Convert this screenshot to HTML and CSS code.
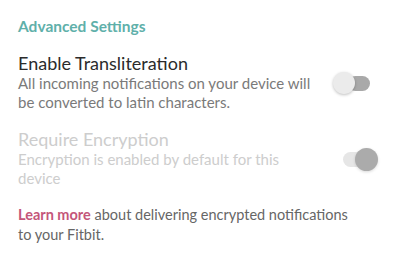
FILE: index.html
```html
<!DOCTYPE html>
<html lang="en">
<head>
  <meta charset="UTF-8" />
  <title>Advanced Settings</title>
  <link rel="stylesheet" href="styles.css">
</head>
<body>
  <div class="settings">
    <h2 class="section-title">Advanced Settings</h2>

    <div class="row">
      <div class="row-text">
        <div class="row-title">Enable Transliteration</div>
        <div class="row-desc">All incoming notifications on your device will be converted to latin characters.</div>
      </div>
      <div class="toggle">
        <div class="track"></div>
        <div class="thumb"></div>
      </div>
    </div>

    <div class="row disabled">
      <div class="row-text">
        <div class="row-title">Require Encryption</div>
        <div class="row-desc">Encryption is enabled by default for this device</div>
      </div>
      <div class="toggle on">
        <div class="track"></div>
        <div class="thumb"></div>
      </div>
    </div>

    <p class="note"><span class="learn">Learn more</span> about delivering encrypted notifications to your Fitbit.</p>
  </div>
</body>
</html>
```

FILE: styles.css
```css
body {
  margin: 0;
  background-color: #fff;
  font-family: Lato, sans-serif;
}

.settings {
  padding: 17px 22px 0 18px;
}

.section-title {
  margin: 0 0 18px;
  font-size: 15.5px;
  line-height: 18px;
  font-weight: 700;
  color: #5fb0aa;
}

.row {
  display: flex;
  align-items: center;
  justify-content: space-between;
  margin-bottom: 17px;
}

.row.disabled {
  margin-bottom: 17px;
}

.row-text {
  width: 302px;
}

.row-title {
  font-size: 18px;
  line-height: 21px;
  color: #2b2b2b;
}

.row-desc {
  font-size: 15px;
  line-height: 19px;
  color: #7a7a7a;
}

.disabled .row-title,
.disabled .row-desc {
  color: #cdcdcd;
}

.toggle {
  position: relative;
  width: 45px;
  height: 24px;
}

.track {
  position: absolute;
  top: 5px;
  left: 15px;
  width: 22px;
  height: 15px;
  border-radius: 8px;
  background-color: #a9a9a9;
}

.thumb {
  position: absolute;
  top: 1px;
  left: 0;
  width: 22px;
  height: 22px;
  border-radius: 50%;
  background-color: #ebebeb;
  box-shadow: 0 1px 3px rgba(0, 0, 0, 0.25);
}

.toggle.on .track {
  left: 10px;
  width: 26px;
  background-color: #e6e6e6;
}

.toggle.on .thumb {
  left: 22px;
  top: 1px;
  width: 23px;
  height: 23px;
  background-color: #ababab;
  box-shadow: 0 1px 3px rgba(0, 0, 0, 0.15);
}

.note {
  margin: 0;
  max-width: 340px;
  font-size: 14.5px;
  line-height: 20px;
  color: #666;
}

.learn {
  color: #c4567a;
  font-weight: 700;
}
```
